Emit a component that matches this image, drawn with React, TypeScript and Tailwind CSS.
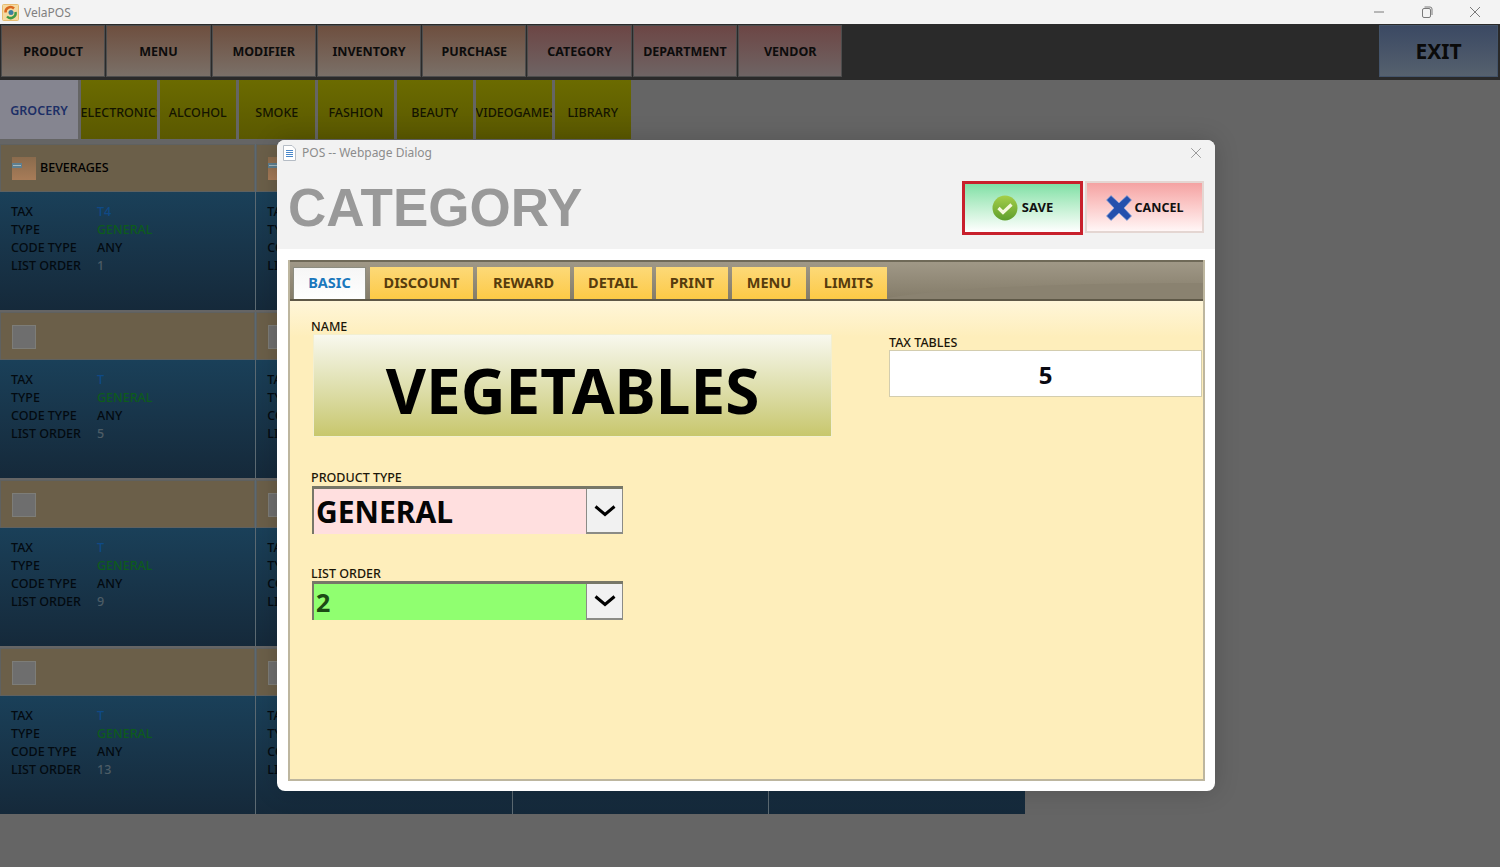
import { ReactNode } from "react";
import { X } from "lucide-react";

const navItems = ["PRODUCT", "MENU", "MODIFIER", "INVENTORY", "PURCHASE", "CATEGORY", "DEPARTMENT", "VENDOR"];
const departments = ["ELECTRONICS", "ALCOHOL", "SMOKE", "FASHION", "BEAUTY", "VIDEOGAMES", "LIBRARY"];
const tabs = [
  { label: "DISCOUNT", width: "w-[103px]" },
  { label: "REWARD", width: "w-[93px]" },
  { label: "DETAIL", width: "w-[78px]" },
  { label: "PRINT", width: "w-[72px]" },
  { label: "MENU", width: "w-[74px]" },
  { label: "LIMITS", width: "w-[77px]" },
];

const rows = [
  { tax: "T4", order: 1, name: "BEVERAGES", box: true },
  { tax: "T", order: 5, name: "", box: false },
  { tax: "T", order: 9, name: "", box: false },
  { tax: "T", order: 13, name: "", box: false },
];

function BoxIcon() {
  return (
    <svg width="24" height="24" viewBox="0 0 24 24" className="shrink-0">
      <defs>
        <linearGradient id="boxFill" x1="0" y1="0" x2="0" y2="1">
          <stop offset="0" stopColor="#8a6b4d" />
          <stop offset="1" stopColor="#a87c58" />
        </linearGradient>
      </defs>
      <rect width="24" height="23" fill="url(#boxFill)" />
      <rect x="0" y="6" width="10" height="5" fill="#5f7f8f" />
      <rect x="1" y="8" width="8" height="1" fill="#a6b8bd" />
    </svg>
  );
}

function Card({ row, col }: { row: (typeof rows)[number]; col: number }) {
  const divider = col < 3 ? "border-r border-[#5c6a72]" : "";
  return (
    <div className={`flex flex-col ${divider}`}>
      <div className="flex h-[48px] items-center gap-[4px] border border-[#5f6160] bg-[#6b5f49] pl-[11px] pt-[1px]">
        {row.box ? <BoxIcon /> : <div className="h-[24px] w-[24px] border border-[#7d7d78] bg-[#6e6e6e]" />}
        <span className="text-[12.5px] font-medium text-black">{row.name}</span>
      </div>
      <div className="h-[118px] bg-gradient-to-b from-[#1a4059] to-[#15293a] pl-[11px] pt-[11px] text-[12.5px] font-medium leading-[18px] text-[#030a10]">
        <div className="flex"><span className="w-[86px]">TAX</span><span className="text-[#0f4a86]">{row.tax}</span></div>
        <div className="flex"><span className="w-[86px]">TYPE</span><span className="text-[#0d5b1c]">GENERAL</span></div>
        <div className="flex"><span className="w-[86px]">CODE TYPE</span><span>ANY</span></div>
        <div className="flex"><span className="w-[86px]">LIST ORDER</span><span className="text-[#4d5d66]">{row.order + col}</span></div>
      </div>
    </div>
  );
}

function Chevron({ className = "" }: { className?: string }) {
  return (
    <svg width="22" height="12" viewBox="0 0 22 12" className={className}>
      <path d="M1.5 1.5 L11 9.5 L20.5 1.5" fill="none" stroke="#000" strokeWidth="3" />
    </svg>
  );
}

function SelectBox({ value, bg, height, text }: { value: string; bg: string; height: string; text: string }) {
  return (
    <div className={`flex w-[311px] border-l-2 border-t-[3px] border-[#777768] ${height} ${bg}`}>
      <span className={`flex flex-1 items-center pl-[2px] font-bold ${text}`}>{value}</span>
      <span className="flex w-[37px] items-center justify-center border-b-2 border-l border-r border-[#8b8b86] bg-[#f1f1f1]">
        <Chevron />
      </span>
    </div>
  );
}

function Label({ children }: { children: ReactNode }) {
  return <div className="pt-[1px] text-[12.5px] font-medium leading-[14px] text-[#1c1608]">{children}</div>;
}

export default function App() {
  return (
    <div className="relative h-[867px] w-[1500px] overflow-hidden bg-[#656565] font-['Noto_Sans',sans-serif]">
      {/* window title */}
      <div className="flex h-[24px] items-center bg-[#f3f3f3] pl-[2px]">
        <svg width="17" height="17" viewBox="0 0 17 17">
          <rect x="0.5" y="0.5" width="16" height="16" rx="1" fill="#f5d9a0" stroke="#e8bc70" />
          <path d="M3.5 8.5 A5 5 0 0 1 12 4.5" fill="none" stroke="#d9661d" strokeWidth="2.5" />
          <path d="M13.5 8 A5 5 0 0 1 5 12.5" fill="none" stroke="#3f9a45" strokeWidth="2.5" />
          <circle cx="9" cy="8.5" r="2.5" fill="#3a7fa0" />
        </svg>
        <span className="ml-[5px] pt-[1px] text-[12px] text-[#808080]">VelaPOS</span>
        <div className="ml-auto mr-[19px] flex items-center gap-[36px]">
          <svg width="12" height="12" viewBox="0 0 12 12"><path d="M1 6 H11" stroke="#7a7a7a" /></svg>
          <svg width="12" height="12" viewBox="0 0 12 12" fill="none" stroke="#7a7a7a"><rect x="1.5" y="2.5" width="8" height="9" rx="1.5" /><path d="M3.5 1 H9 A2 2 0 0 1 11 3 V9" /></svg>
          <svg width="12" height="12" viewBox="0 0 12 12"><path d="M1 1 L11 11 M11 1 L1 11" stroke="#7a7a7a" /></svg>
        </div>
      </div>

      {/* main nav */}
      <div className="flex h-[56px] justify-between bg-[#2a2a2a] pl-[1px] pr-[2px] pt-[1px]">
        <div className="flex gap-[1px]">
          {navItems.map((item, i) => (
            <button
              key={item}
              className={`h-[52px] w-[104.3px] border-[1.5px] border-[#4d4d4d] bg-gradient-to-b pt-[2px] text-[12.5px] font-bold text-[#0c0c0c] ${
                i >= 5 ? "from-[#6c4645] to-[#6e6464]" : "from-[#6e4f3f] to-[#7a7068]"
              }`}
            >
              {item}
            </button>
          ))}
        </div>
        <button className="h-[52px] w-[119px] border border-[#44546a] bg-gradient-to-b from-[#3b4963] to-[#56616e] pt-[1px] text-[21px] font-bold text-[#0a0a0a]">
          EXIT
        </button>
      </div>

      {/* departments */}
      <div className="flex h-[60px] gap-[2.6px] pb-[1px] text-[12.5px] font-medium">
        <button className="w-[78px] bg-[#858590] pt-[4px] font-semibold text-[#1d2f66]">GROCERY</button>
        {departments.map((d) => (
          <button key={d} className="w-[76.4px] overflow-hidden whitespace-nowrap bg-gradient-to-b from-[#6b6b00] to-[#5a5800] pt-[7px] text-[#141400]">
            {d}
          </button>
        ))}
      </div>

      {/* category cards */}
      <div className="mt-[4px] grid w-[1025px] grid-cols-4">
        {rows.flatMap((row, r) =>
          [0, 1, 2, 3].map((col) => (
            <div key={`${r}-${col}`} className={r < 3 ? "pb-[2px]" : ""}>
              <Card row={row} col={col} />
            </div>
          )),
        )}
      </div>

      {/* dialog */}
      <div className="absolute left-[277px] top-[140px] flex h-[651px] w-[938px] flex-col overflow-hidden rounded-[8px] bg-white shadow-[0_0_24px_rgba(0,0,0,0.18)]">
        <div className="h-[109px] shrink-0 bg-[#f2f2f2]">
          <div className="flex h-[26px] items-center pl-[5px] pr-[10px]">
            <svg width="15" height="16" viewBox="0 0 15 16">
              <path d="M1.5 0.5 H10 L13.5 4 V15.5 H1.5 Z" fill="#fff" stroke="#b5bcc5" />
              <path d="M4 5.5 H11 M4 7.5 H11 M4 9.5 H11 M4 11.5 H11" stroke="#4a87c9" />
            </svg>
            <span className="ml-[5px] text-[12px] text-[#8c8c8c]">POS -- Webpage Dialog</span>
            <X className="ml-auto" size={18} strokeWidth={0.9} color="#707070" />
          </div>
          <div className="flex items-start justify-between pl-[11px] pr-[11px] pt-[15px]">
            <h1 className="mt-[-3px] font-['Liberation_Sans',sans-serif] text-[53px] font-bold leading-[60px] text-[#999999]">CATEGORY</h1>
            <div className="flex gap-[2px]">
              <button className="flex h-[54px] w-[121px] items-center justify-center gap-[4px] border-[3px] border-[#c8202c] bg-gradient-to-b from-[#7fe0a6] to-[#ffffff] text-[13px] font-bold text-[#111]">
                <svg width="26" height="26" viewBox="0 0 26 26">
                  <defs>
                    <linearGradient id="okFill" x1="0" y1="0" x2="0" y2="1">
                      <stop offset="0" stopColor="#a5cf4a" />
                      <stop offset="1" stopColor="#5e9e2b" />
                    </linearGradient>
                  </defs>
                  <circle cx="13" cy="13" r="12.5" fill="url(#okFill)" />
                  <path d="M6.5 13 L11 17.5 L19.5 9.5" fill="none" stroke="#f4f8dc" strokeWidth="3.2" />
                </svg>
                SAVE
              </button>
              <button className="flex h-[52px] w-[119px] items-center justify-center gap-[3px] border-2 border-[#e4d6d2] bg-gradient-to-b from-[#f4a2a2] to-[#fff6f6] pt-[2px] text-[12.5px] font-bold text-[#111]">
                <svg width="26" height="26" viewBox="0 0 26 26">
                  <path d="M0.5 5 L5 0.5 L13 8 L21 0.5 L25.5 5 L18 13 L25.5 21 L21 25.5 L13 18 L5 25.5 L0.5 21 L8 13 Z" fill="#2450ad" stroke="#8ea8da" strokeWidth="0.8" />
                </svg>
                CANCEL
              </button>
            </div>
          </div>
        </div>

        <div className="mx-[11px] mt-[11px] flex h-[521px] w-[917px] flex-col border-x-2 border-b-2 border-[#bdb69f]">
          {/* tab strip */}
          <div className="relative flex h-[41px] shrink-0 gap-[4px] overflow-hidden border-y-2 border-t-[#6f6958] border-b-[#5e5847] bg-gradient-to-b from-[#a09887] to-[#847c69] pl-[3px] pt-[5px]">
            <svg className="absolute bottom-0 right-0" width="320" height="22" viewBox="0 0 320 22">
              <path d="M0 22 C60 10 200 6 320 6 V22 Z" fill="#8a8270" />
            </svg>
            <button className="relative h-[34px] w-[73px] border-x border-t border-[#8c8c80] bg-gradient-to-b from-[#f6f6f6] to-[#ffffff] pb-[4px] text-[14.5px] font-bold text-[#1b78bd]">BASIC</button>
            {tabs.map((tab) => (
              <button key={tab.label} className={`relative h-[34px] ${tab.width} bg-gradient-to-b from-[#fdd977] to-[#fcc940] pb-[3px] text-[14.5px] font-bold text-[#573c0d]`}>
                {tab.label}
              </button>
            ))}
          </div>

          {/* form */}
          <div className="flex flex-1 bg-[#feeebb] bg-[linear-gradient(#fff6d9,#feeebb_36px)] pl-[21px]">
            <div className="w-[578px] shrink-0 pt-[18px]">
              <Label>NAME</Label>
              <div className="ml-[2px] flex h-[103px] w-[519px] items-center justify-center border border-[#f3efd0] bg-gradient-to-b from-[#f8f8ee] to-[#c8c76c] pt-[8px] text-[62px] font-bold leading-none text-black">
                VEGETABLES
              </div>
              <div className="mt-[33px]"><Label>PRODUCT TYPE</Label></div>
              <div className="ml-[1px] mt-[1px]">
                <SelectBox value="GENERAL" bg="bg-[#ffdfdf]" height="h-[48px]" text="text-[30px] text-[#050505]" />
              </div>
              <div className="mt-[32px]"><Label>LIST ORDER</Label></div>
              <div className="ml-[1px]">
                <SelectBox value="2" bg="bg-[#90ff70]" height="h-[39px]" text="pt-[2px] text-[25px] text-[#1c4a14]" />
              </div>
            </div>
            <div className="pt-[34px]">
              <Label>TAX TABLES</Label>
              <div className="flex h-[47px] w-[313px] items-center justify-center border border-[#d3cdaf] bg-white pt-[2px] text-[24px] font-bold text-[#0a0a12]">
                5
              </div>
            </div>
          </div>
        </div>
      </div>
    </div>
  );
}
